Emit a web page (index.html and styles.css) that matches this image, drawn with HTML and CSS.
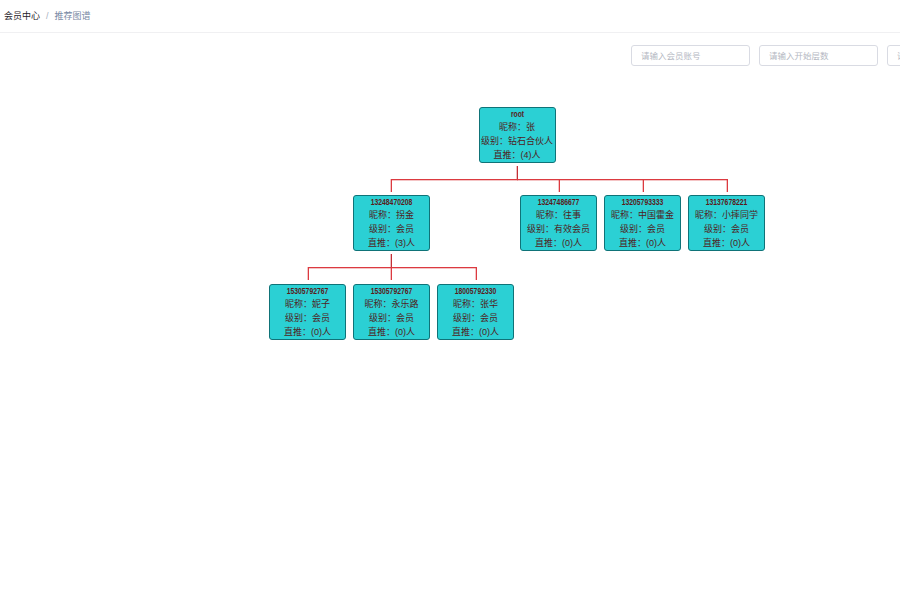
FILE: index.html
```html
<!DOCTYPE html>
<html lang="zh">
<head>
<meta charset="utf-8">
<title>推荐图谱</title>
<link rel="stylesheet" href="styles.css">
</head>
<body>
<header class="topbar">
  <span class="crumb-main">会员中心</span>
  <span class="crumb-sep">/</span>
  <span class="crumb-sub">推荐图谱</span>
</header>
<div class="page">
  <div class="filters">
    <input class="field" placeholder="请输入会员账号">
    <input class="field" placeholder="请输入开始层数">
    <input class="field" placeholder="请输入结束层数">
  </div>
  <div class="tree">
    <div class="branch root">
      <div class="node"><div class="acct">root</div><div>昵称：张</div><div>级别：钻石合伙人</div><div>直推：(4)人</div></div>
      <div class="children">
        <div class="branch parent">
          <div class="node"><div class="acct">13248470208</div><div>昵称：拐金</div><div>级别：会员</div><div>直推：(3)人</div></div>
          <div class="children">
            <div class="branch"><div class="node"><div class="acct">15305792767</div><div>昵称：妮子</div><div>级别：会员</div><div>直推：(0)人</div></div></div>
            <div class="branch"><div class="node"><div class="acct">15305792767</div><div>昵称：永乐路</div><div>级别：会员</div><div>直推：(0)人</div></div></div>
            <div class="branch"><div class="node"><div class="acct">18005792330</div><div>昵称：张华</div><div>级别：会员</div><div>直推：(0)人</div></div></div>
          </div>
        </div>
        <div class="branch"><div class="node"><div class="acct">13247486677</div><div>昵称：往事</div><div>级别：有效会员</div><div>直推：(0)人</div></div></div>
        <div class="branch"><div class="node"><div class="acct">13205793333</div><div>昵称：中国霍金</div><div>级别：会员</div><div>直推：(0)人</div></div></div>
        <div class="branch"><div class="node"><div class="acct">13137678221</div><div>昵称：小摔同学</div><div>级别：会员</div><div>直推：(0)人</div></div></div>
      </div>
    </div>
  </div>
</div>
</body>
</html>
```
FILE: styles.css
```css
* { box-sizing: border-box; }
html, body { margin: 0; height: 100%; overflow: hidden; background: #fff; }
body { font-family: "Liberation Sans", "Noto Sans CJK SC", sans-serif; font-size: 9px; }
.topbar {
  height: 33px;
  display: flex;
  align-items: center;
  padding: 0 0 1px 4px;
  border-bottom: 1px solid #f0f0f2;
}
.crumb-main { color: #1f2329; }
.crumb-sep { margin: 0 6px; color: #a8b0c0; }
.crumb-sub { color: #7a8aa5; }
.page { width: 1034px; }
.filters {
  display: flex;
  justify-content: flex-end;
  gap: 9px;
  padding: 12px 28px 0 0;
}
.field {
  width: 119px;
  height: 21px;
  padding: 0 9px;
  border: 1px solid #d9dbe3;
  border-radius: 3px;
  font: 8.5px "Liberation Sans", "Noto Sans CJK SC", sans-serif;
  outline: none;
  color: #606266;
}
.field::placeholder { color: #b4b8c2; }
.tree { display: flex; justify-content: center; padding-top: 41px; }
.branch {
  position: relative;
  display: flex;
  flex-direction: column;
  align-items: center;
  padding: 16px 3.5px 0;
}
.branch.parent { padding-left: 0; padding-right: 0; margin-right: -1px; }
.branch.root { padding-top: 0; }
.parent .branch { padding-top: 17px; }
.branch::before {
  content: "";
  position: absolute;
  top: 0;
  left: 50%;
  height: 13px;
  border-left: 1px solid #dc3a40;
  box-shadow: -1px 0 0 rgba(220, 58, 64, 0.3);
}
.branch::after {
  content: "";
  position: absolute;
  top: 0;
  left: 0;
  right: 0;
  border-top: 1px solid #dc3a40;
  box-shadow: 0 1px 0 rgba(220, 58, 64, 0.3);
}
.branch:first-child::after { left: 50%; }
.branch:last-child::after { right: 50%; }
.branch.root::before, .branch.root::after { display: none; }
.parent::before, .parent > .children::before, .parent .branch:nth-child(2)::before { margin-left: -1px; }
.children { display: flex; position: relative; padding-top: 16px; }
.children::before {
  content: "";
  position: absolute;
  top: 3px;
  left: 50%;
  height: 13px;
  border-left: 1px solid #c43036;
  box-shadow: -1px 0 0 rgba(196, 48, 54, 0.3);
}
.node {
  width: 77px;
  height: 56px;
  background: #2bd0d4;
  border: 1px solid #0f7378;
  border-radius: 3px;
  color: #4f2222;
  text-align: center;
  line-height: 14px;
  white-space: nowrap;
}
.acct {
  font-size: 8.5px;
  font-weight: bold;
  line-height: 12px;
  color: #5a1a1a;
  transform: scaleX(0.8);
}
```
